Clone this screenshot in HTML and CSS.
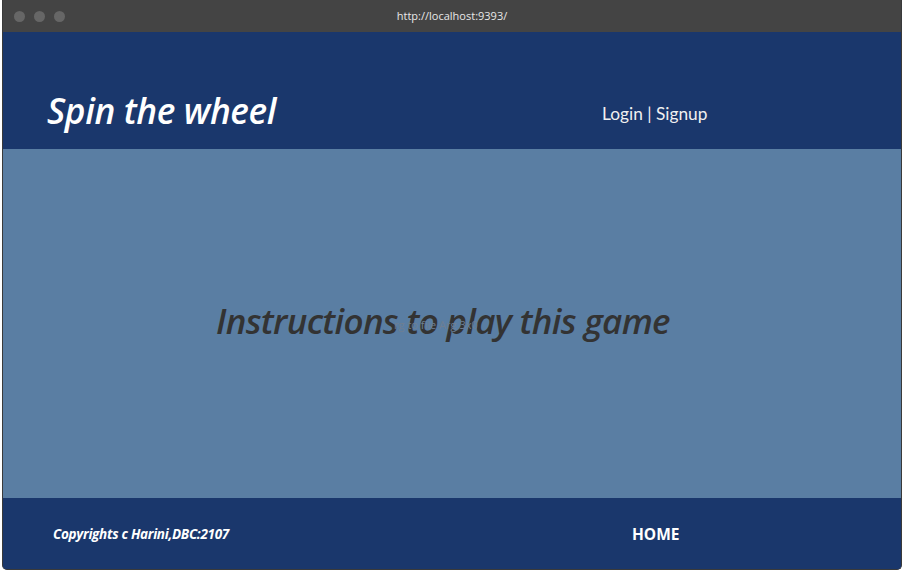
FILE: index.html
```html
<!DOCTYPE html>
<html>
<head>
<meta charset="utf-8">
<link rel="stylesheet" href="styles.css">
</head>
<body>
<div class="window">
  <div class="chrome">
    <div class="dots"><span class="dot"></span><span class="dot"></span><span class="dot"></span></div>
    <div class="url">http://localhost:9393/</div>
  </div>
  <header class="header">
    <h1 class="title">Spin the wheel</h1>
    <nav class="auth">Login | Signup</nav>
  </header>
  <main class="main">
    <div class="instr-wrap">
      <h2 class="instr">Instructions to play this game</h2>
      <span class="ghost">rg to file Arg 3x0</span>
    </div>
  </main>
  <footer class="footer">
    <p class="copy">Copyrights c Harini,DBC:2107</p>
    <a class="home">HOME</a>
  </footer>
</div>
</body>
</html>
```
FILE: styles.css
```css
* { box-sizing: border-box; }
html, body { margin: 0; padding: 0; background: #fff; }
body { font-family: Lato, "Open Sans", sans-serif; }
.window {
  width: 900px;
  margin-left: 2px;
  height: 570px;
  border-radius: 0 0 5px 5px;
  overflow: hidden;
  display: flex;
  flex-direction: column;
  background: #1a376c;
  border-left: 1px solid #3a3a3a;
  border-right: 1px solid #3a3a3a;
  border-bottom: 1px solid #3a3a3a;
}
.chrome {
  height: 32px;
  background: #444444;
  display: flex;
  align-items: center;
  position: relative;
  margin: 0 -1px;
  padding-left: 12px;
}
.dots { display: flex; gap: 9px; }
.dot { width: 11px; height: 11px; border-radius: 50%; background: #666; }
.url {
  position: absolute;
  left: 0; right: 0;
  top: 8px;
  text-align: center;
  color: #e8e8e8;
  font-family: "Open Sans", sans-serif;
  font-size: 11px;
}
.header {
  height: 117px;
  background: #1a376c;
  display: flex;
  align-items: center;
  color: #fff;
}
.title {
  margin: 0;
  padding-left: 44px;
  padding-top: 38px;
  font-family: "Open Sans", sans-serif;
  font-style: italic;
  font-weight: 600;
  font-size: 35.3px;
  letter-spacing: -0.4px;
  width: 599px;
}
.auth {
  padding-top: 45px;
  font-size: 17.3px;
  color: #f0f0f0;
}
.main {
  height: 349px;
  background: #5a7ea3;
  display: flex;
  align-items: center;
  justify-content: center;
  padding-right: 18px;
  padding-bottom: 6px;
}
.instr-wrap { position: relative; }
.instr {
  margin: 0;
  font-family: "Open Sans", sans-serif;
  font-style: italic;
  font-weight: 600;
  font-size: 35px;
  letter-spacing: -0.7px;
  color: #333;
}
.ghost {
  position: absolute;
  left: 178px;
  top: 20px;
  font-size: 11px;
  color: #6e7f92;
  font-family: "Open Sans", sans-serif;
}
.footer {
  flex: 1;
  background: #1a376c;
  display: flex;
  align-items: center;
  color: #fff;
}
.copy {
  margin: 0;
  padding-left: 50px;
  width: 629px;
  font-family: "Open Sans", sans-serif;
  font-style: italic;
  font-weight: 700;
  font-size: 13.5px;
  letter-spacing: -0.3px;
}
.home {
  font-family: "Open Sans", sans-serif;
  font-weight: 700;
  font-size: 15.5px;
}
```
